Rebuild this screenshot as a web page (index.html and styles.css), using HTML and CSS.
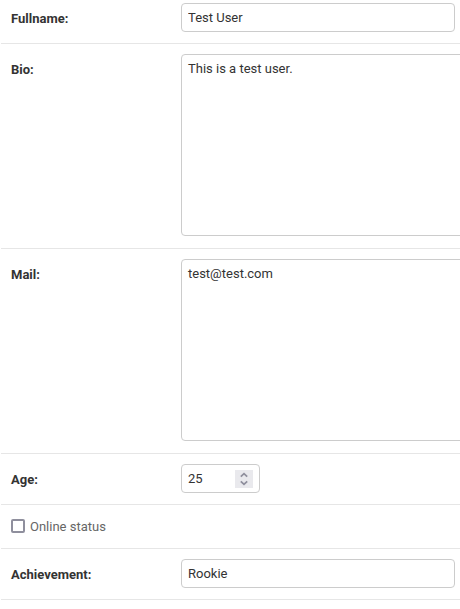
FILE: index.html
```
<!DOCTYPE html>
<html lang="en">
<head>
<meta charset="utf-8">
<title>Change user</title>
<link rel="stylesheet" href="styles.css">
</head>
<body>
<form class="module">
  <div class="row">
    <label class="name" for="fullname">Fullname:</label>
    <input class="field text" id="fullname" type="text" value="Test User">
  </div>
  <div class="row tall">
    <label class="name" for="bio">Bio:</label>
    <textarea class="field area" id="bio">This is a test user.</textarea>
  </div>
  <div class="row tall">
    <label class="name" for="mail">Mail:</label>
    <textarea class="field area" id="mail" spellcheck="false">test@test.com</textarea>
  </div>
  <div class="row">
    <label class="name" for="age">Age:</label>
    <div class="number">
      <input class="field age" id="age" type="number" value="25">
      <svg class="spinner" viewBox="0 0 18 18" aria-hidden="true">
        <path d="M5.8 6.6 9 3.7 12.2 6.6M5.8 11.4 9 14.3 12.2 11.4"/>
      </svg>
    </div>
  </div>
  <div class="row status">
    <input class="check" id="online" type="checkbox">
    <label class="option" for="online">Online status</label>
  </div>
  <div class="row">
    <label class="name" for="achievement">Achievement:</label>
    <input class="field text" id="achievement" type="text" value="Rookie">
  </div>
</form>
</body>
</html>
```
FILE: styles.css
```
* {
  box-sizing: border-box;
}

body {
  margin: 0;
  background: #fff;
  color: #333;
  font: 13px/16px Roboto, "Liberation Sans", sans-serif;
  overflow: hidden;
}

.module {
  margin-left: 1px;
}

.row {
  display: flex;
  align-items: flex-start;
  padding: 10px 10px 11px;
  border-bottom: 1px solid #e6e6e6;
}

.row:first-child {
  padding-top: 3px;
}

.tall {
  padding-bottom: 12px;
}

.name {
  flex: 0 0 170px;
  padding-top: 8px;
  font-weight: 700;
}

.field {
  margin: 0;
  padding: 5px 6px;
  border: 1px solid #ccc;
  border-radius: 4px;
  background: #fff;
  color: #333;
  font: inherit;
}

.text {
  flex: none;
  width: 274px;
  height: 29px;
}

.area {
  flex: none;
  width: 610px;
  height: 182px;
  padding-top: 6px;
  resize: none;
}

.number {
  position: relative;
}

.age {
  display: block;
  width: 79px;
  height: 29px;
  appearance: textfield;
}

.age::-webkit-inner-spin-button {
  appearance: none;
  margin: 0;
}

.spinner {
  position: absolute;
  top: 6px;
  right: 7px;
  width: 18px;
  height: 18px;
  background: #e9e9ed;
  fill: none;
  stroke: #8f8f9d;
  stroke-width: 1.8;
  pointer-events: none;
}

.status {
  gap: 5px;
  padding-top: 14px;
  padding-bottom: 13px;
}

.check {
  appearance: none;
  width: 14px;
  height: 14px;
  margin: 0;
  border: 2px solid #8f8f9d;
  border-radius: 2px;
  background: #fff;
}

.check:checked {
  background: #8f8f9d;
}

.option {
  color: #666;
}
```
